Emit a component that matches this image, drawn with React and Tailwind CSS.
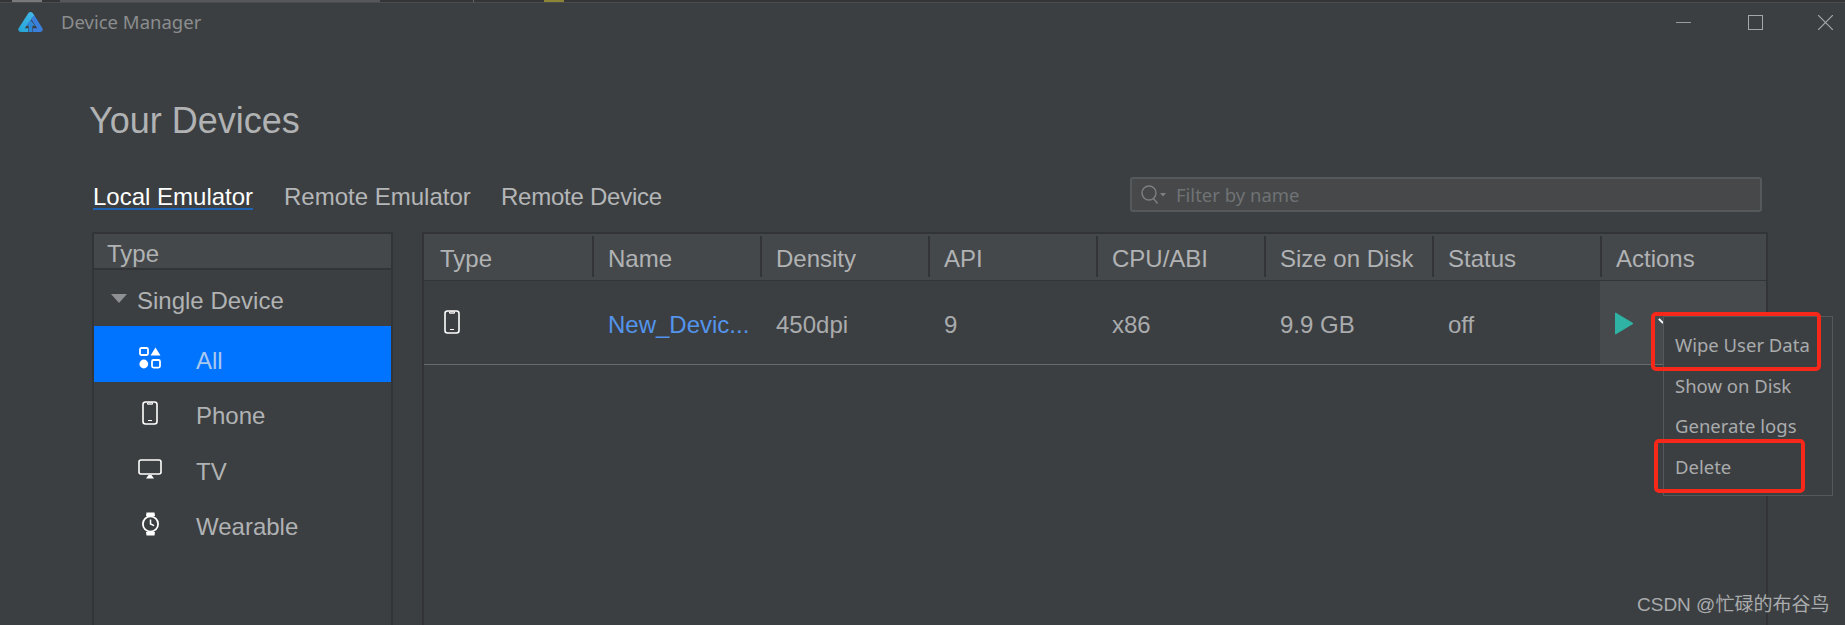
const sans = "font-['Liberation_Sans',Arial,sans-serif]";

function Phone({ className }) {
  return (
    <svg viewBox="0 0 16 24" className={className} fill="none">
      <rect x="1" y="1" width="14" height="22" rx="2.5" stroke="#fff" strokeWidth="1.6" />
      <path d="M5.5 2h5v1.2h-5zM6 19.5h4" stroke="#fff" strokeWidth="1" />
    </svg>
  );
}

function AllIcon() {
  return (
    <svg viewBox="0 0 22 22" className="w-[22px] h-[22px]" fill="none">
      <rect x="1" y="1" width="8" height="7" rx="1.5" stroke="#fff" strokeWidth="1.8" />
      <path d="M16.5 .5 21.5 8.5h-10z" fill="#fff" />
      <circle cx="4.8" cy="17" r="4.4" fill="#fff" />
      <rect x="13" y="13" width="8" height="7.6" rx="1.5" stroke="#fff" strokeWidth="1.8" />
    </svg>
  );
}

function Tv() {
  return (
    <svg viewBox="0 0 24 20" className="w-6 h-5" fill="none">
      <rect x="1" y="1" width="22" height="14" rx="2" stroke="#fff" strokeWidth="1.6" />
      <path d="M8 19.5 10.5 16h3l2.5 3.5z" fill="#fff" />
    </svg>
  );
}

function Watch() {
  return (
    <svg viewBox="0 0 18 24" className="w-[19px] h-6" fill="none">
      <path d="M4.5 4 5 .5h8l.5 3.5zM4.5 20l.5 3.5h8l.5-3.5z" fill="#fff" />
      <circle cx="9" cy="12" r="7.6" stroke="#fff" strokeWidth="1.8" />
      <path d="M9 7.5V12l3.6 1.6" stroke="#fff" strokeWidth="1.5" />
    </svg>
  );
}

const cols = ["Type", "Name", "Density", "API", "CPU/ABI", "Size on Disk", "Status", "Actions"];
const cells = ["450dpi", "9", "x86", "9.9 GB", "off"];
const sideRows = [
  { label: "All", icon: <AllIcon />, on: true },
  { label: "Phone", icon: <Phone className="w-[16px] h-6" /> },
  { label: "TV", icon: <Tv /> },
  { label: "Wearable", icon: <Watch /> },
];

export default function App() {
  return (
    <div className={`relative w-[1845px] h-[625px] overflow-hidden bg-[#3c3f41] ${sans}`}>
      <div className="h-[3px] overflow-hidden bg-[#333537] border-b border-[#4a4c4e] flex">
        <div className="ml-[12px] w-[30px] h-[2px] bg-[#77797b]" />
        <div className="ml-[18px] w-[320px] h-[2px] bg-[#55575a]" />
        <div className="ml-[93px] w-[1px] h-[2px] bg-[#666]" />
        <div className="ml-[70px] w-[20px] h-[2px] bg-[#8c8535]" />
      </div>

      <div className="h-[38px] relative flex items-center pl-[18px]">
        <svg viewBox="0 0 26 21" className="w-[25px] h-[20px]">
          <defs>
            <linearGradient id="lg" x1="0" y1="1" x2="0.6" y2="0">
              <stop offset="0" stopColor="#25a3d6" />
              <stop offset="1" stopColor="#3fb6e6" />
            </linearGradient>
          </defs>
          <path d="M11 .8c1-1 3-1 4 0l2 2.700-10 13.500h3.500v4H3c-2 0-3.500-2-2.500-4z" fill="url(#lg)" />
          <path d="M17 3.500l8.500 13.500c1 2-.5 4-2.500 4h-7.500v-4H20L13.500 7z" fill="#3b7fdc" />
          <path d="M13 8.500l5 6h-3V21h-4v-6.500H8z" fill="#2e86d4" />
        </svg>
        <span className="ml-[18px] text-[18.500px] text-[#8b8d8f] font-['Noto_Sans',sans-serif]">Device Manager</span>
        <div className="absolute right-[12px] top-[12px] flex items-center">
          <div className="w-[15px] h-[1.5px] bg-[#9a9c9e] mr-[57px]" />
          <div className="w-[15px] h-[15px] border-[1.5px] border-[#a5a7a9] mr-[55px]" />
          <svg viewBox="0 0 15 15" className="w-[15px] h-[15px]" stroke="#a5a7a9" strokeWidth="1.2"><path d="M0 0l15 15M15 0 0 15" /></svg>
        </div>
      </div>

      <div className="pl-[89px] pt-[60px] h-[136px] text-[36px] leading-[40px] text-[#b0b2b4]">Your Devices</div>

      <div className="flex items-start h-[55px] pl-[93px] pr-[83px]">
        <div className="mt-[6px] h-[27px] border-b-2 border-[#1e62b4] text-[24px] leading-[28px] text-white w-[160px] whitespace-nowrap">Local Emulator</div>
        <div className="ml-[31px] mt-[6px] text-[24px] leading-[28px] text-[#b4b6b8] whitespace-nowrap w-[187px]">Remote Emulator</div>
        <div className="ml-[30px] mt-[6px] text-[24px] leading-[28px] tracking-[-0.25px] text-[#b4b6b8] whitespace-nowrap">Remote Device</div>
        <div className="ml-auto w-[632px] h-[35px] flex items-center pl-[8px] rounded-[3px] border-2 border-[#56595b] bg-[#464849]">
          <svg viewBox="0 0 26 22" className="w-[26px] h-[22px]" fill="none" stroke="#7d8082" strokeWidth="1.4">
            <circle cx="9" cy="9" r="7" />
            <path d="M13.500 14.500l4 5" />
            <path d="M20 9h6l-3 3.500z" fill="#7d8082" stroke="none" />
          </svg>
          <span className="ml-[10px] text-[18.500px] text-[#707375] font-['Noto_Sans',sans-serif]">Filter by name</span>
        </div>
      </div>

      <div className="flex h-[393px] pl-[92px]">
        <div className="w-[301px] border-x-2 border-t-2 border-[#323437]">
          <div className="h-[36px] pl-[13px] pt-[3px] bg-[#45484a] border-b-2 border-[#323437] text-[24px] leading-[34px] text-[#b0b2b4]">Type</div>
          <div className="h-[56px] pl-[43px] pt-[6px] relative flex items-center text-[24px] text-[#b0b2b4]">
            <div className="absolute left-[17px] top-[24px] w-0 h-0 border-x-[8px] border-x-transparent border-t-[9px] border-t-[#8e9092]" />
            Single Device
          </div>
          {sideRows.map((r) => (
            <div key={r.label} className={`h-[55.500px] flex items-center text-[24px] ${r.on ? "bg-[#0073ff] text-[#a9c8ee]" : "text-[#b0b2b4]"}`}>
              <div className="w-[112px] flex justify-center mt-[8px]">{r.icon}</div>
              <span className="mt-[14px] -ml-[10px]">{r.label}</span>
            </div>
          ))}
        </div>

        <div className="ml-[29px] w-[1346px] border-x-2 border-t-2 border-[#323437]">
          <div className="grid grid-cols-[repeat(7,168px)_1fr] h-[47px] bg-[#45484a] border-b border-[#323437]">
            {cols.map((c, i) => (
              <div key={c} className={`h-[41px] mt-[2px] pt-[4px] flex items-center text-[24px] text-[#b0b2b4] ${i ? "pl-[14px] border-l-2 border-[#323437]" : "pl-[16px]"}`}>{c}</div>
            ))}
          </div>
          <div className="grid grid-cols-[repeat(7,168px)_1fr] h-[84px] items-center text-[24px] text-[#a9abad] border-b border-[#686a6c]">
            <div className="pl-[20px] mb-[2px]"><Phone className="w-[16px] h-6" /></div>
            <div className="pl-[16px] mt-[4px] text-[#5394ec] whitespace-nowrap">New_Devic...</div>
            {cells.map((c) => (
              <div key={c} className="pl-[16px] mt-[4px]">{c}</div>
            ))}
            <div className="h-full bg-[#464a4c] flex items-center pl-[14px]">
              <svg viewBox="0 0 20 23" className="w-[20px] h-[23px] mt-[2px]"><path d="M1.500 1 19 11.500 1.500 22z" fill="#2fb3a4" stroke="#2fb3a4" strokeLinejoin="round" /></svg>
            </div>
          </div>
        </div>
      </div>

      <div className="absolute left-[1658px] top-[320px] w-[6px] h-[2px] rotate-45 bg-white" />

      <div className="absolute left-[1663px] top-[316px] w-[170px] h-[180px] bg-[#3c3f41] border border-[#55585a] pl-[11px] pt-[8px] text-[18.500px] leading-[40.500px] text-[#a9abad] font-['Noto_Sans',sans-serif]">
        <div>Wipe User Data</div>
        <div>Show on Disk</div>
        <div>Generate logs</div>
        <div>Delete</div>
      </div>

      <div className="absolute left-[1651px] top-[312px] w-[170px] h-[59px] rounded-[5px] border-4 border-[#f5281a]" />
      <div className="absolute left-[1654px] top-[439px] w-[151px] h-[54px] rounded-[5px] border-4 border-[#f5281a]" />

      <div className="absolute left-[1637px] top-[593px] text-[19px] leading-[24px] text-[#a9abad] whitespace-nowrap font-['Liberation_Sans','Noto_Sans_CJK_SC',sans-serif]">CSDN @忙碌的布谷鸟</div>
    </div>
  );
}
